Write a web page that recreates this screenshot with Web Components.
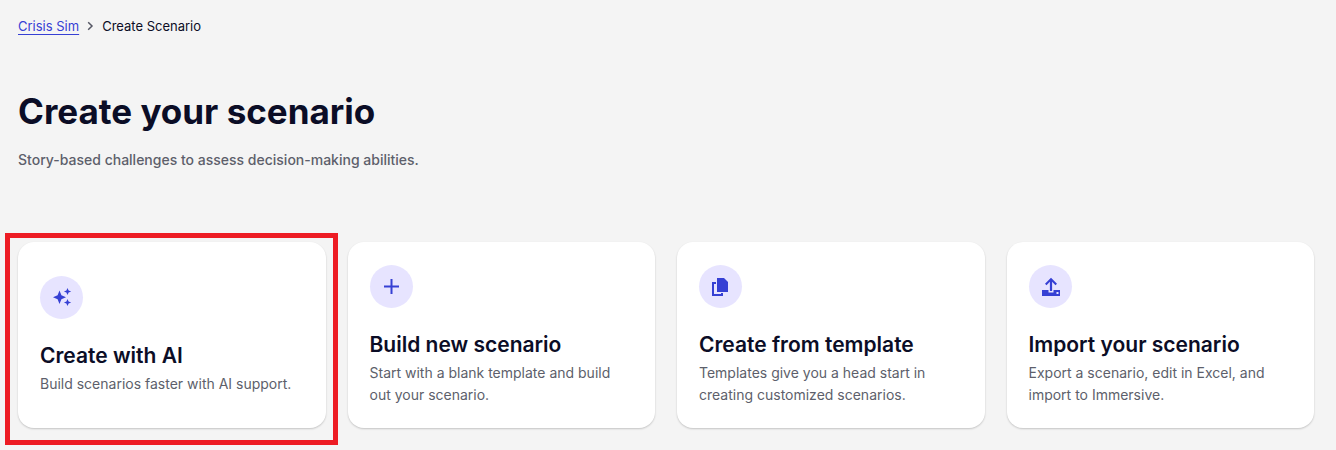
<!DOCTYPE html>
<html lang="en">
<head>
<meta charset="utf-8">
<meta name="viewport" content="width=device-width, initial-scale=1">
<title>Create Scenario</title>
<style>
  body { margin: 0; background: #f4f4f4; color: #0b0d26; font-family: Inter, "Liberation Sans", sans-serif; }
</style>
</head>
<body>
<create-page>
  <bread-crumbs slot="crumbs" parent="Crisis Sim" current="Create Scenario"></bread-crumbs>
  <span slot="title">Create your scenario</span>
  <span slot="intro">Story-based challenges to assess decision-making abilities.</span>
  <option-card icon="sparkle" highlighted><span slot="title">Create with AI</span>Build scenarios faster with AI support.</option-card>
  <option-card icon="plus"><span slot="title">Build new scenario</span>Start with a blank template and build out your scenario.</option-card>
  <option-card icon="copy"><span slot="title">Create from template</span>Templates give you a head start in creating customized scenarios.</option-card>
  <option-card icon="upload"><span slot="title">Import your scenario</span>Export a scenario, edit in Excel, and import to Immersive.</option-card>
</create-page>

<script>
class CreatePage extends HTMLElement {
  constructor() {
    super();
    this.attachShadow({ mode: "open" }).innerHTML = `
      <style>
        :host { display: block; padding: 16px 22px 22px 18px; }
        h1 { margin: 51px 0 0; font-size: 35px; line-height: 48px; font-weight: 700; }
        p { margin: 15px 0 0; font-size: 14px; line-height: 20px; font-weight: 500; color: #5d5f6b; }
        section { display: grid; grid-template-columns: repeat(4, minmax(0, 1fr)); gap: 22px; margin-top: 72px; }
        @media (max-width: 960px) { section { grid-template-columns: repeat(2, minmax(0, 1fr)); } }
        @media (max-width: 560px) { section { grid-template-columns: minmax(0, 1fr); } }
      </style>
      <slot name="crumbs"></slot>
      <main>
        <h1><slot name="title"></slot></h1>
        <p><slot name="intro"></slot></p>
        <section><slot></slot></section>
      </main>`;
  }
}

class BreadCrumbs extends HTMLElement {
  connectedCallback() {
    if (this.shadowRoot) return;
    this.attachShadow({ mode: "open" }).innerHTML = `
      <style>
        :host { display: block; font-size: 13px; line-height: 20px; }
        nav { display: flex; align-items: center; gap: 8px; }
        a { color: #3640d4; text-decoration: underline; text-decoration-thickness: 1px; text-underline-offset: 3px; }
        svg { width: 7px; height: 10px; }
      </style>
      <nav aria-label="Breadcrumb">
        <a href="#"></a>
        <svg viewBox="0 0 7 10" fill="none" stroke="#555764" stroke-width="1.5" aria-hidden="true"><path d="M1.2 1.2 5 5 1.2 8.8"/></svg>
        <span aria-current="page"></span>
      </nav>`;
    this.shadowRoot.querySelector("a").textContent = this.getAttribute("parent");
    this.shadowRoot.querySelector("span").textContent = this.getAttribute("current");
  }
}

const ICONS = {
  sparkle: '<path d="M9.5 4.500 11.400 9.200 16 11.200 11.400 13.200 9.500 18 7.600 13.200 3 11.200 7.600 9.200ZM17.500 2 18.600 4.400 21.200 5.500 18.600 6.600 17.500 9 16.400 6.600 13.900 5.500 16.400 4.400ZM17.500 13 18.600 15.400 21.200 16.500 18.600 17.600 17.500 20 16.400 17.600 13.900 16.500 16.400 15.400Z"/>',
  plus: '<path d="M10.500 4h2v6.500H19v2h-6.500V19h-2v-6.500H4v-2h6.500z"/>',
  copy: '<path d="M8 3h7l4 4v10H8zM3 7h4v2H5v10h7v-1h2v3H3z"/>',
  upload: '<path d="M12 2.700 18 8.700 16.500 10.200 13.100 6.800V16H10.900V6.800L7.500 10.200 6 8.700ZM3 15h6.500v2.400h5V15H21v6H3zm14.500 2v2h2v-2z" fill-rule="evenodd"/>'
};

class OptionCard extends HTMLElement {
  connectedCallback() {
    if (this.shadowRoot) return;
    this.attachShadow({ mode: "open" }).innerHTML = `
      <style>
        :host { display: grid; position: relative; }
        a { display: flex; flex-direction: column; justify-content: center; box-sizing: border-box; padding: 23px 22px 22px;
            border-radius: 16px; background: #fff; box-shadow: 0 1px 2px rgb(0 0 0 / 20%); color: inherit; text-decoration: none; }
        .badge { display: grid; place-items: center; width: 43px; height: 43px; border-radius: 50%; background: #e7e4ff; }
        svg { width: 23px; height: 23px; fill: #3640d4; }
        h2 { margin: 22px 0 3px; font-size: 21px; line-height: 29px; font-weight: 600; }
        p { margin: 0; font-size: 14px; line-height: 22px; color: #5d5f6b; }
        :host([highlighted])::after { content: ""; position: absolute; inset: -9px -12px -17px -13px; border: 5px solid #ed1c24; pointer-events: none; }
      </style>
      <a href="#">
        <span class="badge"><svg viewBox="0 0 23 23" aria-hidden="true">${ICONS[this.getAttribute("icon")]}</svg></span>
        <h2><slot name="title"></slot></h2>
        <p><slot></slot></p>
      </a>`;
  }
}

customElements.define("create-page", CreatePage);
customElements.define("bread-crumbs", BreadCrumbs);
customElements.define("option-card", OptionCard);
</script>
</body>
</html>
